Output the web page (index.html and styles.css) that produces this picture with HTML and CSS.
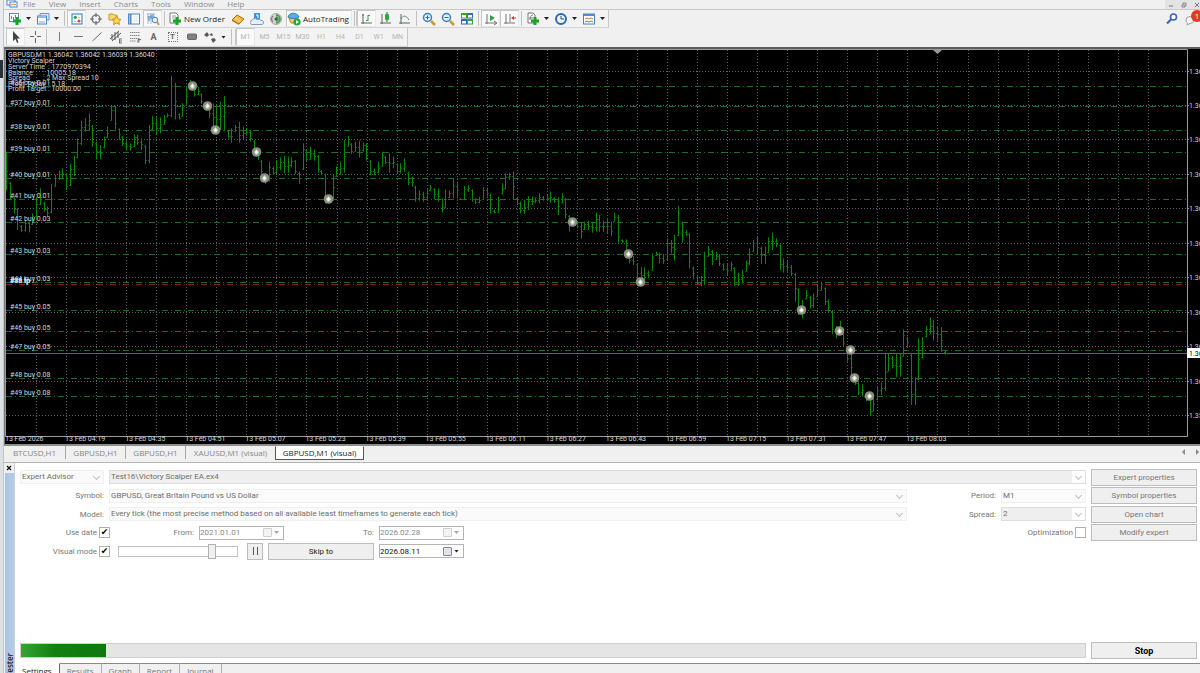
FILE: index.html
```
<!DOCTYPE html>
<html lang="en">
<head>
    <meta charset="UTF-8">
    <meta name="viewport" content="width=device-width, initial-scale=1.0">
    <title>GBPUSD,M1 (visual)</title>
    <link rel="stylesheet" href="styles.css">
</head>
<body>
    <div class="edge"></div>
    <div class="terminal">
        <!-- Menu -->
        <nav class="menubar">
            <svg class="app-icon" viewBox="0 0 12 8"><rect x="1" y="0" width="8" height="5" fill="#fff" stroke="#4a86c8"/><rect x="4" y="2" width="7" height="5" fill="#fff" stroke="#4a86c8"/><path d="M5 5l2-1 2 1 1-1" stroke="#e08a2a" fill="none"/></svg>
            <a href="#">File</a>
            <a href="#">View</a>
            <a href="#">Insert</a>
            <a href="#">Charts</a>
            <a href="#">Tools</a>
            <a href="#">Window</a>
            <a href="#">Help</a>
            <div class="window-controls">
                <button aria-label="Minimize"><svg viewBox="0 0 6 6"><path d="M1 4h4" stroke="#777"/></svg></button>
                <button aria-label="Restore"><svg viewBox="0 0 6 6"><path d="M1 3h3v2H1zM2 3V1h3v3H4" stroke="#888" fill="none"/></svg></button>
                <button aria-label="Close"><svg viewBox="0 0 6 6"><path d="M1 1l4 4M5 1L1 5" stroke="#777"/></svg></button>
            </div>
        </nav>

        <!-- Standard toolbar -->
        <div class="toolbar-row">
            <div class="toolbar">
                <button class="drop" aria-label="New chart"><svg viewBox="0 0 14 14"><rect x="1.500" y="1.500" width="9" height="8" fill="#fff" stroke="#6b8aa8"/><path d="M3.500 7V4M5.500 8V5M7.500 6V3" stroke="#5a9a5a"/><path d="M9 5v8M5 9h8" stroke="#18a428" stroke-width="3"/></svg><i class="arrow"></i></button>
                <button class="drop" aria-label="Profiles"><svg viewBox="0 0 14 14"><path d="M4 4V1.500h9V8h-2" fill="#dcebfa" stroke="#5f97cf"/><rect x="1.500" y="4" width="9" height="8" fill="#fff" stroke="#4a86c8"/><path d="M2 5h8" stroke="#8dbbe8" stroke-width="2"/><path d="M3 10h6" stroke="#7ba4cc"/></svg><i class="arrow"></i></button>
                <span class="sep"></span>
                <button class="on" aria-label="Market Watch"><svg viewBox="0 0 14 14"><rect x="2" y="2" width="10" height="10" fill="#fff" stroke="#5a9ddb" stroke-width="1.400"/><circle cx="5.300" cy="5.300" r="1.600" fill="#25a244"/><circle cx="9" cy="9" r="1.600" fill="#e2482d"/><path d="M8 5l2 1M4 9l2 1" stroke="#b9b9b9"/></svg></button>
                <button aria-label="Data Window"><svg viewBox="0 0 14 14"><circle cx="7" cy="7" r="4" fill="none" stroke="#666" stroke-width="1.200"/><path d="M7 1v4M7 9v4M1 7h4M9 7h4" stroke="#666" stroke-width="1.200"/></svg></button>
                <button aria-label="Navigator"><svg viewBox="0 0 14 14"><path d="M1 2h4l1 1h3v5H1z" fill="#f6d774" stroke="#c79a2c"/><path d="M8.500 4l1.500 3 3 .4-2.200 2.100.6 3-2.900-1.500-2.900 1.500.6-3L4 7.400 7 7z" fill="#ffd84d" stroke="#c98f14"/></svg></button>
                <button aria-label="Terminal"><svg viewBox="0 0 14 14"><rect x="1.500" y="2" width="11" height="10" fill="#fff" stroke="#4a88c8"/><path d="M3.500 2v10" stroke="#4a88c8" stroke-width="2"/><path d="M6 5h5M6 7h5M6 9h5" stroke="#d5e2f0"/></svg></button>
                <button class="on" aria-label="Strategy Tester"><svg viewBox="0 0 14 14"><path d="M1 2h8M1 5h8M2 1v11M5 1v11" stroke="#9db7d1"/><path d="M3 9V4M5 7V3M7 6V2" stroke="#3f7ec2"/><circle cx="9" cy="8" r="2.800" fill="#e5f2ff" stroke="#4a82bd"/><path d="M11 10l2 3" stroke="#c8962e" stroke-width="2"/></svg></button>
                <span class="sep"></span>
                <button class="wide"><svg viewBox="0 0 14 14"><path d="M2 1h6l2 2v8H2z" fill="#fff" stroke="#777"/><path d="M4 4h4M4 6h3" stroke="#999"/><path d="M9 5v8M5 9h8" stroke="#18a428" stroke-width="3"/></svg>New Order</button>
                <button aria-label="MetaEditor"><svg viewBox="0 0 14 14"><path d="M1 8l5-5 7 4-5 5z" fill="#f3bd45" stroke="#a76d12"/><path d="M1 8l7 4v1L1 9z" fill="#b97917"/><path d="M4 6l5 3" stroke="#fbe3a0"/></svg></button>
                <button aria-label="Community"><svg viewBox="0 0 14 14"><rect x="4" y="1" width="6" height="7" fill="#3f93de"/><path d="M6 3h2v3" stroke="#fff" fill="none"/><path d="M2 12.500a2 2 0 010-4 3 3 0 015-1 3 3 0 014 1 2 2 0 011 4z" fill="#e6effa" stroke="#7d9cc4"/></svg></button>
                <button aria-label="Signals"><svg viewBox="0 0 14 14"><circle cx="7" cy="7" r="5.500" fill="#d0d4d0" stroke="#a5aaa5"/><path d="M7 3a4 4 0 010 8M7 5a2 2 0 010 4" stroke="#2f9e3d" fill="none" stroke-width="1.500"/><path d="M4 4a4 4 0 000 6" stroke="#666" fill="none"/><circle cx="7" cy="7" r="1.500" fill="#555"/></svg></button>
                <button class="wide on auto"><svg viewBox="0 0 14 14"><path d="M2 6h9l-1 5H4z" fill="#f2cf52" stroke="#b98f1f"/><path d="M1 5c1-5 9-5 11 0-3 2-8 2-11 0z" fill="#58aee6" stroke="#2b7fbd"/><circle cx="10" cy="10" r="3.600" fill="#1ea83a"/><path d="M9 8l3 2-3 2z" fill="#fff"/></svg>AutoTrading</button>
                <span class="sep double"></span>
                <button class="on" aria-label="Bar Chart"><svg viewBox="0 0 14 14"><path d="M3 2v10M1 11h11M2 3h2" stroke="#5d6662" fill="none"/><path d="M8 3v6M8 3.500h2M6 8.500h2" stroke="#2d9e45" fill="none"/></svg></button>
                <button aria-label="Candlesticks"><svg viewBox="0 0 14 14"><path d="M3 2v10M1 11h11" stroke="#5d6662"/><path d="M8 0v10" stroke="#15701f"/><rect x="6" y="2" width="4" height="6" rx="1" fill="#22b03a"/></svg></button>
                <button aria-label="Line Chart"><svg viewBox="0 0 14 14"><path d="M3 2v10M1 11h11" stroke="#5d6662"/><path d="M3 7c2-4 5-4 8 1" stroke="#5d8a68" fill="none"/></svg></button>
                <span class="sep"></span>
                <button aria-label="Zoom In"><svg viewBox="0 0 14 14"><circle cx="5.500" cy="5.500" r="4" fill="#dff1ff" stroke="#3a7fc0" stroke-width="1.500"/><path d="M3.500 5.500h4M5.500 3.500v4" stroke="#2a70b4"/><path d="M9 9l4 4" stroke="#c99a2d" stroke-width="2.500"/></svg></button>
                <button aria-label="Zoom Out"><svg viewBox="0 0 14 14"><circle cx="5.500" cy="5.500" r="4" fill="#dff1ff" stroke="#3a7fc0" stroke-width="1.500"/><path d="M3.500 5.500h4" stroke="#2a70b4"/><path d="M9 9l4 4" stroke="#c99a2d" stroke-width="2.500"/></svg></button>
                <button aria-label="Tile Windows"><svg viewBox="0 0 14 14"><g fill="#fff"><rect x="1.500" y="2" width="5" height="4" stroke="#3c9f34"/><rect x="7.500" y="2" width="5" height="4" stroke="#3468c4"/><rect x="1.500" y="8" width="5" height="4" stroke="#3468c4"/><rect x="7.500" y="8" width="5" height="4" stroke="#3c9f34"/></g><path d="M1 2h6M7 8h6" stroke="#3c9f34" stroke-width="2"/><path d="M7 2h6M1 8h6" stroke="#3468c4" stroke-width="2"/></svg></button>
                <span class="sep"></span>
                <button class="on" aria-label="Auto Scroll"><svg viewBox="0 0 14 14"><path d="M3 2v10M1 11h11M10 9l3 2-3 2" stroke="#6c7570" fill="none"/><path d="M6 3l5 3-5 3z" fill="#23a53c"/></svg></button>
                <button class="on" aria-label="Chart Shift"><svg viewBox="0 0 14 14"><path d="M3 2v10M1 11h11M7 2v8" stroke="#6c7570" fill="none"/><path d="M8 6l3-2v4z" fill="#c9403a"/><path d="M11 6h2" stroke="#c9403a"/></svg></button>
                <span class="sep"></span>
                <button class="drop" aria-label="Indicators"><svg viewBox="0 0 14 14"><path d="M2 1h5l2 2v8H2z" fill="#fff" stroke="#777"/><path d="M4 8c0-3 1-5 3-5M3 6h4" stroke="#777" fill="none"/><path d="M9 5v8M5 9h8" stroke="#18a428" stroke-width="3"/></svg><i class="arrow"></i></button>
                <button class="drop" aria-label="Periods"><svg viewBox="0 0 14 14"><circle cx="7" cy="7" r="5" fill="#e8f3ff" stroke="#2b68b8" stroke-width="2"/><path d="M7 4v3h3" stroke="#2b4f80" fill="none"/></svg><i class="arrow"></i></button>
                <button class="drop" aria-label="Templates"><svg viewBox="0 0 14 14"><rect x="1.500" y="2" width="11" height="10" fill="#fff" stroke="#4c82ba"/><path d="M2 3h10" stroke="#4c8fd6" stroke-width="2"/><path d="M3 7l2-1 2 1 2-1 2 1" stroke="#c27c37" fill="none"/><path d="M3 10l2-1 2 1 2-1 2 1" stroke="#3fa04a" fill="none"/></svg><i class="arrow"></i></button>
            </div>
            <div class="tools-right">
                <button aria-label="Search"><svg viewBox="0 0 14 14"><circle cx="8.500" cy="5" r="3" fill="#fff" stroke="#3a63c0" stroke-width="1.600"/><path d="M6 7.500l-4 4" stroke="#3a63c0" stroke-width="2.200"/></svg></button>
                <button class="chat" aria-label="Notifications"><svg viewBox="0 0 14 14"><path d="M2 8a4 3.500 0 114 3.500L3 13l.5-2A3 3 0 012 8z" fill="#f4f4f4" stroke="#a0a0a0"/></svg><span class="badge">1</span></button>
            </div>
        </div>

        <!-- Line studies and timeframes -->
        <div class="toolbar-row second">
            <div class="toolbar">
                <button class="on" aria-label="Cursor"><svg viewBox="0 0 14 14"><path d="M4 1v10l2.500-2 1.500 4 1.500-.7L8 8.500h3z" fill="#444"/></svg></button>
                <button aria-label="Crosshair"><svg viewBox="0 0 14 14"><path d="M7.500 1v4M7.500 8v5M2 6.500h4M9 6.500h4" stroke="#666"/></svg></button>
                <span class="sep"></span>
                <button aria-label="Vertical Line"><svg viewBox="0 0 14 14"><path d="M7.500 2v9" stroke="#777"/></svg></button>
                <button aria-label="Horizontal Line"><svg viewBox="0 0 14 14"><path d="M3 6.500h9" stroke="#777"/></svg></button>
                <button aria-label="Trendline"><svg viewBox="0 0 14 14"><path d="M2.500 11l9-8.500" stroke="#666"/></svg></button>
                <button aria-label="Equidistant Channel"><svg viewBox="0 0 14 14"><path d="M1 9l9-8M3 11l9-8M3 4v6M6 2v8M9 2v6" stroke="#555"/><path d="M10 9h3M10 11h3M10 13h3M10.500 9v4" stroke="#555" stroke-width=".8"/></svg></button>
                <button aria-label="Fibonacci Retracement"><svg viewBox="0 0 14 14"><path d="M2 2.500h10M2 5.500h10M2 8.500h10M2 11h6" stroke="#888" stroke-dasharray="1.500 .5"/><path d="M10 13V9.500h3M10 11h2" stroke="#555" fill="none" stroke-width=".8"/></svg></button>
                <button class="letter">A</button>
                <button class="letter boxed"><span>T</span></button>
                <button aria-label="Rectangle"><svg viewBox="0 0 14 14"><rect x="2.500" y="4" width="9" height="5.500" rx="1" fill="#808080" stroke="#666"/></svg></button>
                <button class="drop" aria-label="Arrows"><svg viewBox="0 0 14 14"><path d="M1 5l3-3 2 3-2 2zM8 9l3-1 2 2-3 3zM6 5l3-2 1 3M5 8l3 2" fill="#555"/></svg><i class="arrow"></i></button>
                <span class="sep double frames"></span>
                <button class="tf on">M1</button>
                <button class="tf">M5</button>
                <button class="tf">M15</button>
                <button class="tf">M30</button>
                <button class="tf">H1</button>
                <button class="tf">H4</button>
                <button class="tf">D1</button>
                <button class="tf">W1</button>
                <button class="tf">MN</button>
            </div>
        </div>

        <!-- Chart, filled by script.js -->
        <div class="chart">
            <svg id="chart"></svg>
        </div>

        <div class="chart-tabs">
            <a href="#">BTCUSD,H1</a>
            <a href="#">GBPUSD,H1</a>
            <a href="#">GBPUSD,H1</a>
            <a href="#" class="visual">XAUUSD,M1 (visual)</a>
            <a href="#" class="active">GBPUSD,M1 (visual)</a>
            <div class="scroll">
                <button aria-label="Scroll left"><svg viewBox="0 0 6 6"><path d="M4 0v6L1 3z" fill="#888"/></svg></button>
                <button aria-label="Scroll right"><svg viewBox="0 0 6 6"><path d="M2 0v6l3-3z" fill="#888"/></svg></button>
            </div>
        </div>

        <!-- Strategy tester -->
        <div class="tester">
            <div class="tester-side">
                <button class="close" aria-label="Close tester"><svg viewBox="0 0 6 6"><path d="M1 1l4 4M5 1L1 5" stroke="#111" stroke-width="1.300"/></svg></button>
                <div class="caption"><span>Tester</span></div>
            </div>
            <div class="tester-main">
                <div class="panel">
                    <form class="settings">
                        <span class="combo"><select disabled aria-label="Program type"><option>Expert Advisor</option></select></span>
                        <span class="combo filled expert"><select disabled aria-label="Expert"><option>Test16\Victory Scalper EA.ex4</option></select></span>

                        <label for="symbol">Symbol:</label>
                        <span class="combo"><select id="symbol" disabled><option>GBPUSD, Great Britain Pound vs US Dollar</option></select></span>
                        <label for="period">Period:</label>
                        <span class="combo"><select id="period" disabled><option>M1</option></select></span>

                        <label for="model">Model:</label>
                        <span class="combo"><select id="model" disabled><option>Every tick (the most precise method based on all available least timeframes to generate each tick)</option></select></span>
                        <label for="spread">Spread:</label>
                        <span class="combo filled"><select id="spread" disabled><option>2</option></select></span>

                        <div class="line">
                            <label class="check">Use date<input type="checkbox" checked></label>
                            <label class="from" for="from">From:</label>
                            <span class="date off"><input id="from" type="text" value="2021.01.01" disabled><i class="cal"></i><i class="arrow"></i></span>
                            <label class="to" for="to">To:</label>
                            <span class="date off"><input id="to" type="text" value="2026.02.28" disabled><i class="cal"></i><i class="arrow"></i></span>
                            <label class="check last">Optimization<input type="checkbox"></label>
                        </div>
                        <div class="line">
                            <label class="check">Visual mode<input type="checkbox" checked></label>
                            <input class="speed" type="range" min="0" max="100" value="81" aria-label="Speed">
                            <button type="button" class="btn pause" aria-label="Pause"><svg viewBox="0 0 8 8"><path d="M2.500 0v8M6.500 0v8" stroke="#555"/></svg></button>
                            <button type="button" class="btn skip">Skip to</button>
                            <span class="date"><input type="text" value="2026.08.11" aria-label="Skip to date"><i class="cal"></i><i class="arrow"></i></span>
                        </div>
                    </form>
                    <div class="actions">
                        <button class="btn gray">Expert properties</button>
                        <button class="btn gray">Symbol properties</button>
                        <button class="btn gray">Open chart</button>
                        <button class="btn gray">Modify expert</button>
                    </div>
                </div>
                <div class="run">
                    <div class="progress"><div class="bar" style="width: 8%"></div></div>
                    <button class="btn stop">Stop</button>
                </div>
                <div class="tester-tabs">
                    <a href="#" class="active">Settings</a>
                    <a href="#">Results</a>
                    <a href="#">Graph</a>
                    <a href="#">Report</a>
                    <a href="#">Journal</a>
                </div>
            </div>
        </div>
    </div>
    <script src="script.js"></script>
</body>
</html>
```
FILE: styles.css
```
* {
    box-sizing: border-box;
}
body {
    margin: 0;
    height: 100vh;
    display: flex;
    overflow: hidden;
    background: #f0f0f0;
    font-family: "Open Sans", "Noto Sans", sans-serif;
    font-size: 8px;
    color: #222;
}
button {
    margin: 0;
    padding: 0;
    border: 1px solid transparent;
    background: none;
    font: inherit;
    color: inherit;
}
a {
    color: inherit;
    text-decoration: none;
}
.edge {
    width: 4px;
    flex: none;
    background: linear-gradient(#e9ebee 60px, #2a3038 60px, #2a3038 78px, #dcdfe3 78px);
    border-right: 1px solid #c4c6c8;
}
.terminal {
    flex: 1;
    min-width: 0;
    display: flex;
    flex-direction: column;
}
.arrow {
    width: 5px;
    height: 3px;
    background: #222;
    clip-path: polygon(0 0, 100% 0, 50% 100%);
}

/* Menu */
.menubar {
    height: 9px;
    flex: none;
    display: flex;
    padding-left: 2px;
    line-height: 7px;
    color: #8c8c8c;
    overflow: hidden;
}
.app-icon {
    width: 12px;
    height: 8px;
    margin-right: 5px;
}
.menubar a {
    margin-right: 13px;
}
.window-controls {
    margin-left: auto;
    width: 35px;
    flex: none;
    display: flex;
    justify-content: space-between;
    padding-left: 3px;
    background: #e3e3e3;
}
.window-controls button {
    width: 6px;
    border: 0;
    line-height: 0;
}
.window-controls svg {
    width: 6px;
    height: 6px;
}

/* Toolbars */
.toolbar-row {
    height: 19px;
    flex: none;
    display: flex;
    justify-content: space-between;
    border-top: 1px solid #c8c8c8;
}
.toolbar {
    display: flex;
    padding-left: 2px;
    background: #f3f3f3;
    border-right: 1px solid #c8c8c8;
    border-bottom: 1px solid #d4d4d4;
}
.second {
    border-top: 0;
}
.toolbar button {
    width: 19px;
    display: flex;
    align-items: center;
    justify-content: center;
}
.toolbar svg, .tools-right svg {
    width: 14px;
    height: 14px;
    flex: none;
}
.toolbar button.drop {
    width: 28px;
    justify-content: flex-start;
    gap: 4px;
    padding-left: 1px;
}
.toolbar button.on {
    background: #fafafa;
    border-color: #c6c6c6 #e8e8e8 #e8e8e8 #c6c6c6;
}
.toolbar button.wide {
    width: 61px;
    justify-content: flex-start;
    gap: 2px;
    white-space: nowrap;
}
.toolbar button.auto {
    width: 66px;
    margin-left: 1px;
}
.sep {
    width: 5px;
    margin: 1px 0;
    background: linear-gradient(90deg, transparent 2px, #c0c0c0 2px, #c0c0c0 3px, transparent 3px);
}
.sep.double {
    border-right: 1px solid #c8c8c8;
}
.sep.frames {
    width: 7px;
}
.toolbar button.letter {
    font: bold 9px Roboto, sans-serif;
    color: #666;
}
.boxed span {
    width: 10px;
    border: 1px dotted #777;
    font-size: 8px;
    line-height: 8px;
}
.toolbar button.tf {
    font: 7px Roboto, sans-serif;
    color: #b4b4b4;
}
.tools-right {
    display: flex;
    align-items: center;
    gap: 3px;
    padding-right: 1px;
}
.tools-right button {
    width: 16px;
    border: 0;
    line-height: 0;
}
.chat {
    position: relative;
}
.chat .badge {
    position: absolute;
    top: -2px;
    right: -4px;
    width: 12px;
    height: 12px;
    border-radius: 50%;
    background: #df3a22;
    color: #fff;
    font-size: 8px;
    line-height: 12px;
    text-align: center;
}

/* Chart */
.chart {
    flex: none;
    height: 399px;
    background: #000;
    border-top: 2px solid #5c5e5c;
    border-bottom: 2px solid #8d8d8d;
    border-left: 1px solid #777;
}
.chart svg {
    display: block;
    width: 100%;
    height: 395px;
    font-family: Roboto, sans-serif;
    font-size: 7px;
    fill: #d6d6d6;
}
.grid {
    stroke: #5c656e;
    stroke-dasharray: 1 2;
}
.frame {
    stroke: #9a9a9a;
    fill: none;
}
.order-line {
    stroke: #206a2b;
    stroke-dasharray: 6 3 1 3;
}
.stop-line {
    stroke: #8c1818;
    stroke-dasharray: 6 3 1 3;
}
.price-line {
    stroke: #59666c;
}
.ohlc {
    stroke: #078807;
    fill: none;
}
.ticks {
    stroke: #056005;
    fill: none;
}
.marker .ring {
    fill: #8b8f80;
}
.marker .core {
    fill: #fff;
    stroke: #b9cfae;
}
.price-box {
    fill: #fff;
}
.price-now {
    fill: #000;
}

/* Chart tabs */
.chart-tabs {
    height: 17px;
    flex: none;
    display: flex;
    border-bottom: 1px solid #b5b5b5;
    background: #f0f0f0;
    color: #868686;
}
.chart-tabs a {
    width: 60px;
    margin-bottom: 3px;
    border-right: 1px solid #a8a8a8;
    text-align: center;
    line-height: 13px;
    white-space: nowrap;
}
.chart-tabs a:first-child {
    width: 62px;
}
.chart-tabs a.visual {
    width: 89px;
    border-right: 0;
}
.chart-tabs a.active {
    width: 89px;
    margin-bottom: 2px;
    background: #fff;
    border: 1px solid #555;
    border-top-color: #fff;
    line-height: 11px;
    color: #222;
}
.scroll {
    margin-left: auto;
    display: flex;
    gap: 7px;
    padding-top: 3px;
}
.scroll button {
    width: 6px;
    height: 6px;
    border: 0;
    line-height: 0;
}
.scroll svg {
    width: 6px;
    height: 6px;
    display: block;
}

/* Tester */
.tester {
    flex: 1;
    min-height: 0;
    display: flex;
    font-family: Roboto, "Liberation Sans", Arial, sans-serif;
    color: #777;
}
.tester-side {
    width: 11px;
    flex: none;
    display: flex;
    flex-direction: column;
    border-right: 1px solid #c9ced6;
}
.close {
    height: 10px;
    line-height: 0;
}
.close svg {
    width: 6px;
    height: 6px;
}
.caption {
    flex: 1;
    display: flex;
    align-items: flex-end;
    margin-left: 1px;
    background: linear-gradient(90deg, #a9c4e2, #b6cce8);
    overflow: hidden;
}
.caption span {
    writing-mode: vertical-rl;
    transform: rotate(180deg);
    margin-bottom: -4px;
    line-height: 9px;
    color: #222;
    font-family: "Open Sans", sans-serif;
    font-weight: 600;
}
.tester-main {
    flex: 1;
    min-width: 0;
    display: flex;
    flex-direction: column;
    background: #fff;
}
.panel {
    flex: 1;
    display: flex;
    gap: 5px;
    padding: 5px 3px 0 5px;
}
.settings {
    flex: 1;
    min-width: 0;
    display: grid;
    grid-template-columns: 84px 1fr 84px 85px;
    grid-template-rows: 18px 19px 18px 19px 18px;
    column-gap: 5px;
    align-items: center;
}
.settings label {
    text-align: right;
}
.combo {
    height: 14px;
    display: block;
    position: relative;
    border: 1px solid #f0f0f0;
    background: #fafafa;
}
.combo::after {
    content: "";
    position: absolute;
    top: 3px;
    right: 4px;
    width: 4px;
    height: 4px;
    border: solid #c0c0c0;
    border-width: 0 1px 1px 0;
    transform: rotate(45deg);
}
.combo.filled {
    border-color: #dedede;
    background: linear-gradient(#efefef, #efefef) no-repeat left / calc(100% - 13px) 100% #fff;
}
.expert {
    grid-column: 2 / -1;
}
.combo select {
    width: 100%;
    height: 12px;
    display: block;
    appearance: none;
    margin: 0;
    padding: 0 1px;
    border: 0;
    background: none;
    font: inherit;
    line-height: 12px;
    color: #6e6e6e;
    opacity: 1;
}
.line {
    grid-column: 1 / -1;
    display: flex;
    align-items: center;
}
.check {
    width: 90px;
    flex: none;
    display: flex;
    align-items: center;
    justify-content: flex-end;
    gap: 2px;
}
.check.last {
    margin-left: auto;
}
.check input {
    appearance: none;
    width: 11px;
    height: 11px;
    margin: 0;
    border: 1px solid #b0b0b0;
    background: #fff;
    color: #000;
    font: bold 9px/9px "DejaVu Sans", sans-serif;
    text-align: center;
}
.check input:checked::before {
    content: "✔";
}
.from {
    width: 84px;
}
.to {
    width: 90px;
}
.date {
    width: 85px;
    height: 14px;
    flex: none;
    display: flex;
    align-items: center;
    gap: 2px;
    margin-left: 5px;
    padding-right: 4px;
    border: 1px solid #b4b4b4;
    background: #fff;
    color: #111;
}
.date input {
    flex: 1;
    min-width: 0;
    margin: 0;
    padding: 0;
    border: 0;
    background: none;
    font: inherit;
    color: inherit;
}
.date.off {
    color: #888;
}
.cal {
    width: 9px;
    height: 9px;
    border: 1px solid #888;
    border-radius: 1px;
    background: #dfe5ea;
}
.off .cal, .off .arrow {
    opacity: 0.4;
}
.speed {
    appearance: none;
    width: 120px;
    height: 11px;
    margin: 0 9px 0 8px;
    border: 1px solid #c0c0c0;
    background: #fff;
}
.speed::-webkit-slider-thumb {
    appearance: none;
    width: 8px;
    height: 15px;
    border: 1px solid #b0b0b0;
    background: #f0f0f0;
}
.btn {
    height: 17px;
    border: 1px solid #bdbdbd;
    background: #efefef;
    color: #222;
}
.pause {
    width: 16px;
    margin-right: 5px;
    line-height: 0;
}
.pause svg {
    width: 8px;
    height: 8px;
}
.skip {
    width: 106px;
}
.actions {
    width: 106px;
    flex: none;
    display: grid;
    grid-template-rows: 18px 19px 18px 19px;
    align-items: center;
}
.gray {
    color: #777;
}
.run {
    display: flex;
    align-items: center;
    gap: 5px;
    padding: 0 3px 4px 5px;
}
.progress {
    flex: 1;
    height: 15px;
    border: 1px solid #cfcfcf;
    background: #e5e5e5;
}
.bar {
    height: 13px;
    background: linear-gradient(90deg, #34a434, #118011 40%, #0e780e);
}
.stop {
    width: 106px;
    color: #000;
    font-size: 9px;
    font-weight: bold;
}
.tester-tabs {
    height: 10px;
    flex: none;
    display: flex;
    overflow: hidden;
    background: #f0f0f0;
    font-family: "Open Sans", sans-serif;
    line-height: 13px;
}
.tester-tabs a {
    padding: 0 7px;
    border-top: 1px solid #8a8a8a;
    border-right: 1px solid #b0b0b0;
}
.tester-tabs::after {
    content: "";
    flex: 1;
    border-top: 1px solid #8a8a8a;
}
.tester-tabs a.active {
    background: #fff;
    border-top-color: #fff;
    border-right-color: #666;
    color: #222;
}
```
FILE: script.js
```
const svg = document.getElementById('chart');
const TOP = 49;
const STEP = 3.755;
const width = svg.clientWidth;
const right = width - 13;

// high / low of every bar, in thirds of a pixel from each block's base
const blocks = [
    { base: 180, bars: [
        [275,390],[365,420],[410,460],[445,510],[495,515],[480,515],[485,517],[460,495],[410,480],[385,435],
        [425,455],[440,470],[372,460],[345,380],[332,360],[325,355],[340,390],[312,378],[288,348],[235,295],
        [182,255],[175,215],[160,212],[195,260],[245,298],[255,298],[230,265],[200,235],[138,182],[138,208],
        [205,240],[228,258],[240,272],[250,272],[222,262],[225,255],[235,270],[255,312],[195,310],[168,210],
        [172,225],[172,220],[165,195],[160,172],[48,172],[68,178],[160,178],[130,170],[78,138],[60,90],
        [75,110],[80,105],[100,132],[128,140],[145,175],[130,205],[140,210],[125,210],[108,212],[210,235],
        [205,248],[195,215],[185,248],[200,238],[205,228],[210,245],[240,280],[270,300],[300,345],[345,372],
        [305,365],[320,345],[300,340],[292,330],[288,340],[290,338],[292,322],[300,342],[335,372],[250,330],
        [268,305],[260,300],[268,302],[285,338],[330,345],[340,430],[405,425],[342,422],[320,350],[305,345],
        [240,338],[228,260],[250,282],[245,275],[242,292],[248,275],[250,302],[300,345],[325,345],[305,340],
        [275,320],[288,312],[280,338],[290,325],[310,340]
    ] },
    { base: 450, bars: [
        [40,70],[25,65],[65,105],[80,110],[108,155],[122,152],[125,155],[115,150],[105,122],[115,148],
        [115,155],[145,187],[118,175],[122,145],[85,145],[100,140],[145,150],[108,150],[105,125],[118,155],
        [145,162],[140,160],[112,150],[112,140],[132,190],[180,190],[140,188],[100,132],[70,118],[68,90],
        [65,148],[140,165],[155,190],[150,192],[138,180],[140,165],[142,160],[130,160],[138,152],[135,152],
        [125,158],[142,158],[142,195],[130,160],[145,205],[195,245],[205,228],[215,235],[218,265],[215,240],
        [212,240],[215,248],[188,245],[195,245],[212,245],[205,250],[215,258],[188,215],[195,278],[268,278],
        [268,300],[300,340],[318,345],[340,395],[352,392],[352,390],[362,385],[310,362],[305,318],[308,340],
        [312,342],[265,330],[270,310],[255,332],[168,258],[215,278],[240,258],[250,355],[350,388],[378,405],
        [378,408],[305,405],[288,320],[300,345],[305,330],[312,348],[340,362],[342,378],[335,362],[352,408],
        [368,408],[360,400],[332,365],[295,345],[270,305],[258,315],[290,342],[290,342],[262,310],[248,300],
        [265,292]
    ] },
    { base: 600, bars: [
        [133,210],[175,218],[182,215],[195,228],[220,305],[265,345],[300,355],[270,298],[288,325],[280,325],
        [252,290],[245,272],[262,315],[298,335],[330,402],[378,415],[362,400],[400,440],[440,485],[460,540],
        [530,555],[545,585],[552,590],[580,605],[595,645],[590,635],[560,600],[548,585],[460,572],[460,515],
        [468,505],[462,532],[460,530],[388,470],[410,440],[462,615],[532,615],[415,540],[412,475],[378,412],
        [352,402],[360,422],[380,422],[382,455],[452,464]
    ] }
];

// ticket, lots, screen row, bar position
const orders = [
    [36, '0.01', 86, 192], [37, '0.01', 106, 207], [38, '0.01', 130, 215], [39, '0.01', 152, 256],
    [40, '0.01', 178, 264], [41, '0.01', 199, 328], [42, '0.03', 222, 572], [43, '0.03', 254, 628],
    [44, '0.03', 282, 640], [45, '0.05', 310, 801], [46, '0.05', 331, 839], [47, '0.05', 350, 850],
    [48, '0.08', 378, 854], [49, '0.08', 396, 869]
];

const times = ['2026', '04:19', '04:35', '04:51', '05:07', '05:23', '05:39', '05:55', '06:11',
    '06:27', '06:43', '06:59', '07:15', '07:31', '07:47', '08:03'];

function add(name, attrs, text) {
    const el = document.createElementNS('http://www.w3.org/2000/svg', name);
    for (const key in attrs) el.setAttribute(key, attrs[key]);
    if (text) el.textContent = text;
    svg.appendChild(el);
    return el;
}

function hline(y, cls) {
    add('path', { class: cls, d: `M1 ${y - TOP + 0.5}H${right}` });
}

function label(x, y, text, cls) {
    add('text', { x: x - 5, y: y - TOP, class: cls || '' }, text);
}

// grid
for (let x = 36; x - 5 < right - 20; x += 30.05) {
    add('path', { class: 'grid', d: `M${Math.round(x) - 4.5} 1V386` });
}
for (let i = 0; i < 11; i++) {
    const y = Math.round(70.5 + i * 34.45);
    hline(y, 'grid');
    add('path', { class: 'frame', d: `M${right} ${y - TOP + 0.5}h2` });
    label(right + 7, y + 3, (1.36321 - i * 0.00034).toFixed(5));
}

// order levels
orders.forEach(o => hline(o[2], 'order-line'));
hline(284, 'stop-line');
hline(353, 'price-line');

// bars
let n = 0;
let prev = null;
let stems = '';
let ticks = '';
blocks.forEach(block => {
    block.bars.forEach(bar => {
        const x = Math.round(1 + n * STEP) + 0.5;
        const hi = (block.base + bar[0]) / 3 - TOP;
        const lo = (block.base + bar[1]) / 3 - TOP;
        const mid = (hi + lo) / 2;
        const open = prev === null ? mid : Math.min(Math.max(prev, hi + 1), lo - 1);
        const close = n % 3 ? mid + (mid - open) * 0.6 : mid;
        stems += `M${x} ${hi}V${lo}`;
        ticks += `M${x - 1.5} ${Math.round(open) + 0.5}h1M${x + 0.5} ${Math.round(close) + 0.5}h1`;
        prev = close;
        n++;
    });
});
add('path', { class: 'ticks', d: ticks });
add('path', { class: 'ohlc', d: stems });

// entry markers
orders.forEach(o => {
    const g = add('g', { class: 'marker', transform: `translate(${o[3] - 4.5} ${o[2] - TOP})` });
    g.innerHTML = '<circle class="ring" r="4.8"/><path class="core" d="M0-2.500L2 0 1 2.200h-2L-2 0z"/>';
});

orders.forEach(o => label(10, o[2] - 1, `#${o[0]} buy ${o[1]}`));
[36, 39, 42, 48].forEach(id => label(10, 283, `#${id} tp`));

// comment block
label(8, 57, 'GBPUSD,M1  1.36042 1.36042 1.36039 1.36040');
label(8, 63, 'Victory Scalper');
[
    ['Server Time', 48, '1770970394'],
    ['Balance', 43, '10005.18'],
    ['Spread', 43, '2 Max Spread 10'],
    ['Profit Today', 48, '5.18'],
    ['Profit Target', 48, '10000.00']
].forEach((row, i) => {
    const y = Math.round(69 + i * 5.6);
    label(8, y, row[0]);
    label(row[1], y, ': ' + row[2]);
});

// frame, time scale and current price
add('path', { class: 'frame', d: `M0.5 387.5V0.5H${right + 0.5}V387.5H0.5` });
add('path', { d: 'M928 1h9l-4.5 4z', fill: '#999' });
times.forEach((t, i) => label(5 + i * 60.08, 441, '13 Feb ' + t));
add('rect', { class: 'price-box', x: right, y: 299, width: 13, height: 10 });
label(right + 7, 356, '1.36040', 'price-now');
```
